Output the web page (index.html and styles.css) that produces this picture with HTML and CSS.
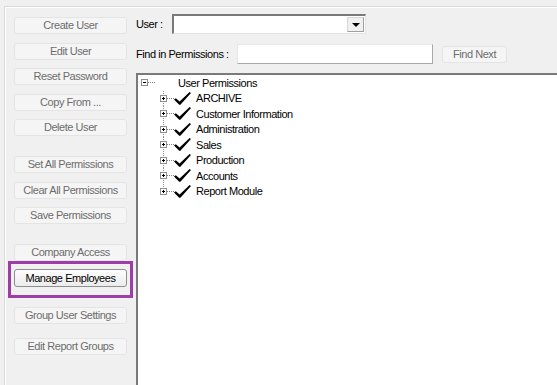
FILE: index.html
```html
<!DOCTYPE html>
<html lang="en">
<head>
    <meta charset="UTF-8">
    <title>User Permissions</title>
    <link rel="stylesheet" href="styles.css">
</head>
<body>
    <div class="frame">
        <div class="sidebar">
            <button class="btn" disabled>Create User</button>
            <button class="btn" disabled>Edit User</button>
            <button class="btn" disabled>Reset Password</button>
            <button class="btn" disabled>Copy From ...</button>
            <button class="btn group-end" disabled>Delete User</button>
            <button class="btn" disabled>Set All Permissions</button>
            <button class="btn" disabled>Clear All Permissions</button>
            <button class="btn group-end" disabled>Save Permissions</button>
            <button class="btn flush" disabled>Company Access</button>
            <div class="highlight">
                <button class="btn active">Manage Employees</button>
            </div>
            <button class="btn wide-gap" disabled>Group User Settings</button>
            <button class="btn" disabled>Edit Report Groups</button>
        </div>

        <div class="main">
            <div class="field-row user-row">
                <label class="field-label user-label">User :</label>
                <div class="combo">
                    <span class="combo-text"></span>
                    <span class="combo-btn"><span class="arrow"></span></span>
                </div>
            </div>
            <div class="field-row find-row">
                <label class="field-label find-label">Find in Permissions :</label>
                <input class="find-input" type="text">
                <button class="btn find-btn" disabled>Find Next</button>
            </div>

            <div class="tree">
                <div class="root-row">
                    <span class="expander minus"></span>
                    <span class="dots"></span>
                    <span class="root-label">User Permissions</span>
                </div>
                <ul class="children">
                    <li class="node">
                        <span class="twig"><span class="expander plus"></span></span>
                        <span class="dash"></span>
                        <svg class="check" viewBox="0 0 17 13"><polygon points="0,7.6 1.8,6.3 5.6,9.6 15.6,0 17,1 6.4,12.8 5.2,12.8"/></svg>
                        <span class="label">ARCHIVE</span>
                    </li>
                    <li class="node">
                        <span class="twig"><span class="expander plus"></span></span>
                        <span class="dash"></span>
                        <svg class="check" viewBox="0 0 17 13"><polygon points="0,7.6 1.8,6.3 5.6,9.6 15.6,0 17,1 6.4,12.8 5.2,12.8"/></svg>
                        <span class="label">Customer Information</span>
                    </li>
                    <li class="node">
                        <span class="twig"><span class="expander plus"></span></span>
                        <span class="dash"></span>
                        <svg class="check" viewBox="0 0 17 13"><polygon points="0,7.6 1.8,6.3 5.6,9.6 15.6,0 17,1 6.4,12.8 5.2,12.8"/></svg>
                        <span class="label">Administration</span>
                    </li>
                    <li class="node">
                        <span class="twig"><span class="expander plus"></span></span>
                        <span class="dash"></span>
                        <svg class="check" viewBox="0 0 17 13"><polygon points="0,7.6 1.8,6.3 5.6,9.6 15.6,0 17,1 6.4,12.8 5.2,12.8"/></svg>
                        <span class="label">Sales</span>
                    </li>
                    <li class="node">
                        <span class="twig"><span class="expander plus"></span></span>
                        <span class="dash"></span>
                        <svg class="check" viewBox="0 0 17 13"><polygon points="0,7.6 1.8,6.3 5.6,9.6 15.6,0 17,1 6.4,12.8 5.2,12.8"/></svg>
                        <span class="label">Production</span>
                    </li>
                    <li class="node">
                        <span class="twig"><span class="expander plus"></span></span>
                        <span class="dash"></span>
                        <svg class="check" viewBox="0 0 17 13"><polygon points="0,7.6 1.8,6.3 5.6,9.6 15.6,0 17,1 6.4,12.8 5.2,12.8"/></svg>
                        <span class="label">Accounts</span>
                    </li>
                    <li class="node">
                        <span class="twig"><span class="expander plus"></span></span>
                        <span class="dash"></span>
                        <svg class="check" viewBox="0 0 17 13"><polygon points="0,7.6 1.8,6.3 5.6,9.6 15.6,0 17,1 6.4,12.8 5.2,12.8"/></svg>
                        <span class="label">Report Module</span>
                    </li>
                </ul>
            </div>
        </div>
    </div>
</body>
</html>
```

FILE: styles.css
```css
html, body {
    margin: 0;
    height: 100%;
    overflow: hidden;
}
body {
    background-color: #f0f0f0;
    font-family: "Liberation Sans", Arial, sans-serif;
    font-size: 11px;
    letter-spacing: -0.45px;
    color: #000;
}
.frame {
    display: flex;
    margin: 6px 0 0 4px;
    height: 420px;
    border-top: 1px solid #dadada;
    border-left: 1px solid #dadada;
    box-shadow: inset 1px 1px 0 #fff;
}

/* left column of buttons */
.sidebar {
    display: flex;
    flex-direction: column;
    align-items: flex-start;
    width: 122px;
    flex-shrink: 0;
    padding: 10px 0 0 9px;
}
.btn {
    font: inherit;
    letter-spacing: inherit;
    width: 113px;
    height: 17px;
    padding: 0;
    margin: 0 0 8.5px 0;
    background-color: #f5f5f5;
    border: 1px solid #e4e4e4;
    border-radius: 3px;
    color: #6d6d6d;
    line-height: 15px;
}
.btn.group-end {
    margin-bottom: 20px;
}
.btn.flush {
    margin-bottom: 0;
}
.btn.wide-gap {
    margin-bottom: 14px;
}
.highlight {
    margin: 0 0 9px -6px;
    padding: 5px 3px 8px 3px;
    border: 3px solid #a03ca8;
}
.btn.active {
    display: block;
    height: 18px;
    margin: 0;
    color: #000;
    background: linear-gradient(#fdfdfd, #ececec);
    border-color: #8f8f8f;
}

/* right side */
.main {
    flex: 1;
    display: flex;
    flex-direction: column;
}
.field-row {
    display: flex;
    align-items: center;
}
.user-row {
    margin-top: 7px;
    height: 20px;
}
.find-row {
    margin-top: 10px;
    height: 20px;
}
.field-label {
    flex-shrink: 0;
}
.user-label {
    width: 36px;
}
.find-label {
    width: 101px;
}
.combo {
    display: flex;
    width: 194px;
    height: 20px;
    box-sizing: border-box;
    background-color: #fff;
    border-top: 2px solid #7a7a7a;
    border-left: 2px solid #7a7a7a;
    border-right: 1px solid #e3e3e3;
    border-bottom: 1px solid #e3e3e3;
}
.combo-text {
    flex: 1;
}
.combo-btn {
    display: flex;
    align-items: center;
    justify-content: center;
    width: 15px;
    margin: 1px 1px 1px 0;
    background-color: #f0f0f0;
    border: 1px solid #d8d8d8;
    border-right-color: #a0a0a0;
    border-bottom-color: #a0a0a0;
}
.arrow {
    width: 0;
    height: 0;
    border-left: 4px solid transparent;
    border-right: 4px solid transparent;
    border-top: 4px solid #000;
}
.find-input {
    width: 196px;
    height: 20px;
    box-sizing: border-box;
    padding: 0;
    background-color: #fff;
    border: 1px solid #e6e6e6;
    border-right-color: #a8a8a8;
    border-bottom-color: #a8a8a8;
}
.btn.find-btn {
    width: 65px;
    margin: 0 0 0 9px;
}

/* permission tree */
.tree {
    flex: 1;
    margin-top: 9px;
    background-color: #fff;
    border-top: 2px solid #7a7a7a;
    border-left: 2px solid #7a7a7a;
}
.root-row {
    display: flex;
    align-items: center;
    height: 15.5px;
    padding-left: 3px;
}
.expander {
    display: block;
    width: 7px;
    height: 7px;
    box-sizing: border-box;
    border: 1px solid #8f8f8f;
    background-color: #fff;
}
.expander.minus {
    background: linear-gradient(#000, #000) center / 3px 1px no-repeat, #fff;
}
.expander.plus {
    background: linear-gradient(#000, #000) center / 3px 1px no-repeat,
                linear-gradient(#000, #000) center / 1px 3px no-repeat, #fff;
}
.dots {
    width: 7px;
    border-top: 1px dotted #808080;
}
.root-label {
    margin-left: 23px;
    white-space: nowrap;
}
.children {
    list-style: none;
    margin: 0;
    padding: 0 0 0 22px;
}
.node {
    display: flex;
    align-items: center;
    height: 15.5px;
}
.twig {
    display: flex;
    align-items: center;
    align-self: stretch;
    width: 7px;
    background: linear-gradient(#909090 50%, transparent 50%) 3px 0 / 1px 2px repeat-y;
}
.node:last-child .twig {
    background: linear-gradient(#fff, #fff) bottom / 100% 50% no-repeat,
                linear-gradient(#909090 50%, transparent 50%) 3px 0 / 1px 2px repeat-y;
}
.dash {
    width: 7px;
    border-top: 1px dotted #808080;
}
.check {
    width: 17px;
    height: 13px;
    fill: #000;
}
.label {
    margin-left: 5px;
    white-space: nowrap;
}
```
